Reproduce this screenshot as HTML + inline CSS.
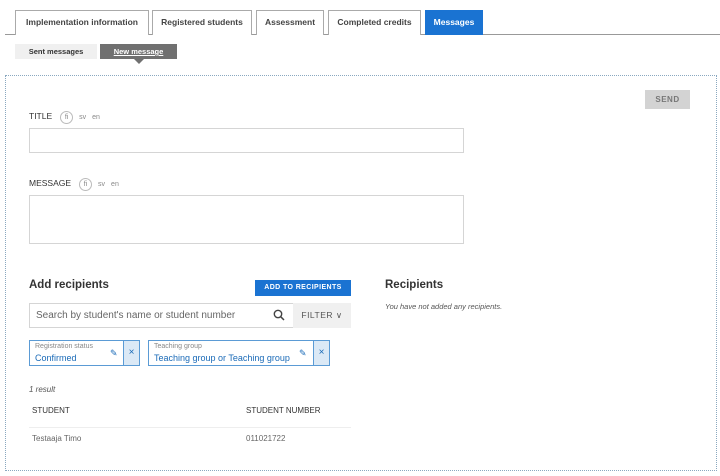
<!DOCTYPE html>
<html><head><style>
*{box-sizing:border-box;margin:0;padding:0}
body{width:720px;height:476px;background:#fff;font-family:"Liberation Sans",sans-serif;position:relative;overflow:hidden;color:#333}
.a{position:absolute}
.tab{position:absolute;top:10px;height:25px;border:1px solid #aaa;border-bottom:none;font-size:8.5px;font-weight:bold;color:#444;text-align:center;line-height:23px;background:#fff}
.lbl{font-size:8.5px;color:#333}
.lang{display:inline-block;font-size:7px;color:#888;margin-left:6px}
.circ{width:13px;height:13px;border:1px solid #bbb;border-radius:50%;text-align:center;line-height:11px}
.inp{position:absolute;border:1px solid #d5d5d5;background:#fff}
.chip{position:absolute;top:340px;height:26px;border:1px solid #5b9bd5;background:#fff}
.chip .t{position:absolute;left:5px;top:2px;font-size:7px;color:#888}
.chip .v{position:absolute;left:5px;top:12px;font-size:9px;color:#1b6bb8}
.chip .x{position:absolute;right:0;top:0;width:16px;height:24px;background:#dbe9f6;border-left:1px solid #5b9bd5;color:#1b6bb8;font-size:10px;text-align:center;line-height:24px}
</style></head><body>
<div class="a" style="left:5px;top:34px;width:715px;height:1px;background:#999"></div>
<div class="tab" style="left:15px;width:134px">Implementation information</div>
<div class="tab" style="left:152px;width:100px">Registered students</div>
<div class="tab" style="left:256px;width:68px">Assessment</div>
<div class="tab" style="left:328px;width:93px">Completed credits</div>
<div class="tab" style="left:425px;width:58px;background:#1a73d2;border-color:#1a73d2;color:#fff">Messages</div>
<div class="a" style="left:15px;top:44px;width:82px;height:15px;background:#f0f0f0;font-size:7.5px;font-weight:bold;text-align:center;line-height:15px">Sent messages</div>
<div class="a" style="left:100px;top:44px;width:77px;height:15px;background:#707070;color:#fff;font-size:7.5px;font-weight:bold;text-align:center;line-height:15px;text-decoration:underline">New message</div>
<div class="a" style="left:134px;top:59px;width:0;height:0;border-left:5px solid transparent;border-right:5px solid transparent;border-top:5px solid #707070"></div>
<div class="a" style="left:5px;top:75px;width:712px;height:396px;border:1px dotted #8aa8c0"></div>
<div class="a" style="left:645px;top:90px;width:45px;height:19px;background:#d3d3d3;color:#777;font-size:8px;font-weight:bold;text-align:center;line-height:19px;letter-spacing:.5px">SEND</div>
<div class="a lbl" style="left:29px;top:110px;line-height:13px">TITLE<span class="lang circ" style="margin-left:8px">fi</span><span class="lang">sv</span><span class="lang">en</span></div>
<div class="inp" style="left:29px;top:128px;width:435px;height:25px"></div>
<div class="a lbl" style="left:29px;top:177px;line-height:13px">MESSAGE<span class="lang circ" style="margin-left:8px">fi</span><span class="lang">sv</span><span class="lang">en</span></div>
<div class="inp" style="left:29px;top:195px;width:435px;height:49px"></div>
<div class="a" style="left:29px;top:279px;font-size:11.5px;font-weight:bold;color:#333">Add recipients</div>
<div class="a" style="left:255px;top:280px;width:96px;height:16px;background:#1a73d2;color:#fff;font-size:7px;font-weight:bold;text-align:center;line-height:16px;letter-spacing:.4px">ADD TO RECIPIENTS</div>
<div class="inp" style="left:29px;top:303px;width:265px;height:25px;font-size:10px;color:#666;padding:6px 0 0 6px">Search by student's name or student number</div>
<svg class="a" style="left:273px;top:309px" width="12" height="12" viewBox="0 0 12 12"><circle cx="5" cy="5" r="3.7" fill="none" stroke="#444" stroke-width="1.4"/><path d="M7.7 7.7L11 11" stroke="#444" stroke-width="1.5"/></svg>
<div class="a" style="left:293px;top:303px;width:58px;height:25px;background:#f0f0f0;font-size:8.5px;color:#555;text-align:center;line-height:25px;letter-spacing:.5px">FILTER ∨</div>
<div class="chip" style="left:29px;width:111px"><div class="t">Registration status</div><div class="v">Confirmed</div><div class="a" style="left:80px;top:7px;color:#1b6bb8;font-size:9px">✎</div><div class="x">×</div></div>
<div class="chip" style="left:148px;width:182px"><div class="t">Teaching group</div><div class="v">Teaching group or Teaching group</div><div class="a" style="left:150px;top:7px;color:#1b6bb8;font-size:9px">✎</div><div class="x">×</div></div>
<div class="a" style="left:29px;top:385px;font-size:8px;font-style:italic;color:#555">1 result</div>
<div class="a" style="left:32px;top:406px;font-size:8px;color:#333">STUDENT</div>
<div class="a" style="left:246px;top:406px;font-size:8px;color:#333">STUDENT NUMBER</div>
<div class="a" style="left:29px;top:427px;width:322px;height:1px;background:#eee"></div>
<div class="a" style="left:32px;top:434px;font-size:8px;color:#666">Testaaja Timo</div>
<div class="a" style="left:246px;top:434px;font-size:8px;color:#666">011021722</div>
<div class="a" style="left:385px;top:279px;font-size:11.5px;font-weight:bold;color:#333">Recipients</div>
<div class="a" style="left:385px;top:302px;font-size:7.5px;font-style:italic;color:#555">You have not added any recipients.</div>
</body></html>
